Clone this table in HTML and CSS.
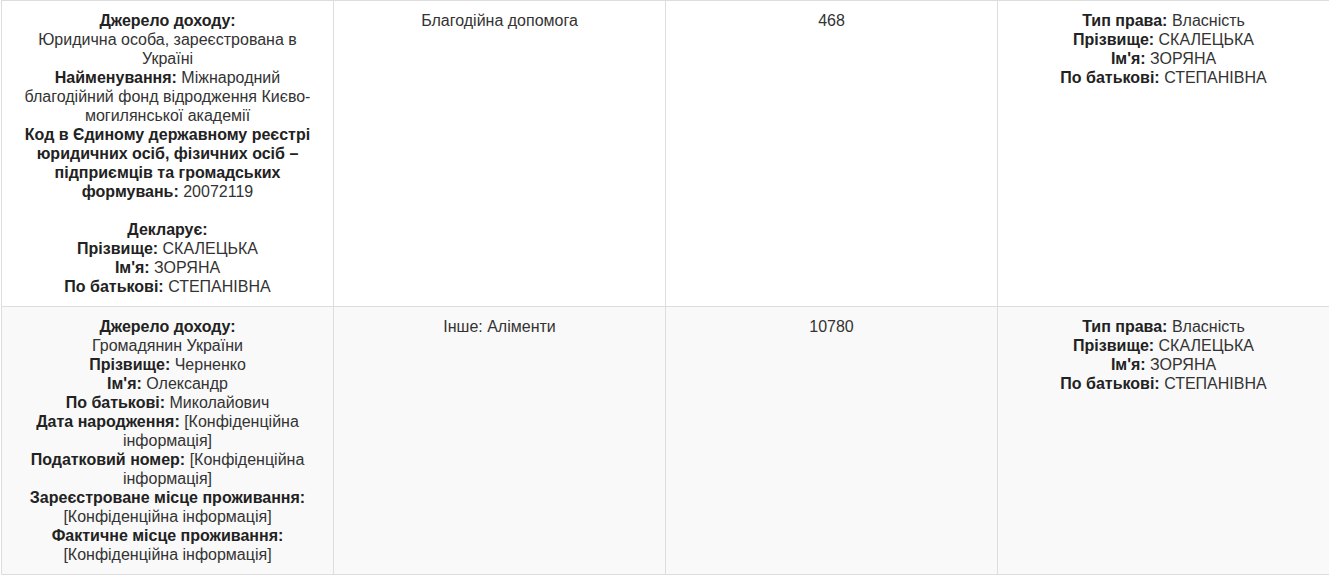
FILE: index.html
```html
<!DOCTYPE html>
<html lang="uk">
<head>
    <meta charset="UTF-8">
    <meta name="viewport" content="width=device-width, initial-scale=1.0">
    <title>Доходи</title>
    <link rel="stylesheet" href="styles.css">
</head>
<body>

<table class="income-table">
    <tbody>
        <tr>
            <td>
                <b>Джерело доходу:</b><br>
                Юридична особа, зареєстрована в Україні<br>
                <b>Найменування:</b> Міжнародний благодійний фонд відродження Києво-могилянської академії<br>
                <b>Код в Єдиному державному реєстрі юридичних осіб, фізичних осіб – підприємців та громадських формувань:</b> 20072119<br>
                <br>
                <b>Декларує:</b><br>
                <b>Прізвище:</b> СКАЛЕЦЬКА<br>
                <b>Ім'я:</b> ЗОРЯНА<br>
                <b>По батькові:</b> СТЕПАНІВНА
            </td>
            <td>Благодійна допомога</td>
            <td>468</td>
            <td>
                <b>Тип права:</b> Власність<br>
                <b>Прізвище:</b> СКАЛЕЦЬКА<br>
                <b>Ім'я:</b> ЗОРЯНА<br>
                <b>По батькові:</b> СТЕПАНІВНА
            </td>
        </tr>
        <tr class="striped">
            <td>
                <b>Джерело доходу:</b><br>
                Громадянин України<br>
                <b>Прізвище:</b> Черненко<br>
                <b>Ім'я:</b> Олександр<br>
                <b>По батькові:</b> Миколайович<br>
                <b>Дата народження:</b> [Конфіденційна інформація]<br>
                <b>Податковий номер:</b> [Конфіденційна інформація]<br>
                <b>Зареєстроване місце проживання:</b> [Конфіденційна інформація]<br>
                <b>Фактичне місце проживання:</b> [Конфіденційна інформація]
            </td>
            <td>Інше: Аліменти</td>
            <td>10780</td>
            <td>
                <b>Тип права:</b> Власність<br>
                <b>Прізвище:</b> СКАЛЕЦЬКА<br>
                <b>Ім'я:</b> ЗОРЯНА<br>
                <b>По батькові:</b> СТЕПАНІВНА
            </td>
        </tr>
    </tbody>
</table>

</body>
</html>
```

FILE: styles.css
```css
html {
    overflow: hidden;
}
body {
    margin: 0;
    padding: 0 0 0 1px;
    background: #fff;
    font-family: "Liberation Sans", Arial, sans-serif;
    font-size: 16px;
    line-height: 19px;
    color: #333;
}
.income-table {
    width: 1329px;
    border-collapse: collapse;
    table-layout: fixed;
}
.income-table td {
    border: 1px solid #ddd;
    padding: 10px;
    text-align: center;
    vertical-align: top;
}
.income-table b {
    color: #222;
}
.income-table .striped td {
    background: #f9f9f9;
}
```
